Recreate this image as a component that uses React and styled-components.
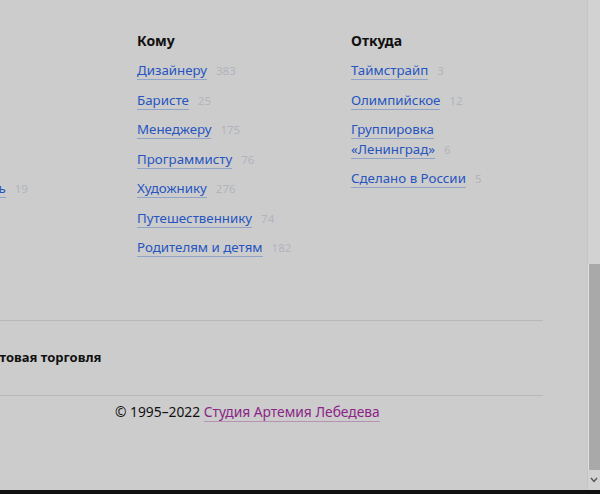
import styled, { createGlobalStyle } from 'styled-components';

const GlobalStyle = createGlobalStyle`
  html, body {
    margin: 0;
    padding: 0;
    background: #cccccc;
    overflow: hidden;
  }
  body {
    font-family: "Noto Sans", "Open Sans", Arial, sans-serif;
  }
`;

const Screen = styled.div`
  width: 600px;
  height: 494px;
  display: flex;
  flex-direction: column;
  overflow: hidden;
`;

const Viewport = styled.div`
  flex: 1;
  display: flex;
  min-height: 0;
`;

const Page = styled.div`
  flex: 1;
  overflow: hidden;
`;

const Inner = styled.div`
  width: 643px;
  margin-left: -100px;
`;

const Columns = styled.div`
  display: grid;
  grid-template-columns: repeat(3, 214px);
  padding: 31px 0 0 23px;
  height: 320px;
  box-sizing: border-box;
`;

const Column = styled.div`
  display: flex;
  flex-direction: column;
  width: 160px;
`;

const Heading = styled.div`
  font-size: 14px;
  font-weight: 700;
  line-height: 20px;
  color: #111;
  margin-bottom: 10px;
`;

const Item = styled.div`
  font-size: 13.3px;
  line-height: 19.5px;
  margin-bottom: 10px;
  color: #2655c0;
`;

const Link = styled.a`
  color: #2655c0;
  text-decoration: none;
  border-bottom: 1px solid rgba(38, 85, 192, 0.35);
`;

const Count = styled.span`
  font-size: 11.5px;
  line-height: 1;
  color: #b0b4bc;
  margin-left: 9px;
`;

const Rule = styled.div`
  height: 1px;
  background: #b8b8b8;
`;

const Category = styled.div`
  padding: 26px 0 28px 81px;
  font-size: 13px;
  font-weight: 700;
  line-height: 20px;
  color: #111;
`;

const Copyright = styled.div`
  padding: 6px 0 0 215px;
  font-size: 13.8px;
  line-height: 20px;
  color: #111;
`;

const StudioLink = styled.a`
  color: #8b2587;
  text-decoration: none;
  border-bottom: 1px solid rgba(139, 37, 135, 0.35);
`;

const Scrollbar = styled.div`
  width: 13px;
  display: flex;
  flex-direction: column;
  background: #d2d2d2;
  border-left: 1px solid #c6c6c6;
  box-sizing: border-box;
`;

const Track = styled.div`
  flex: 1;
  display: flex;
  flex-direction: column;
`;

const Thumb = styled.div`
  margin-top: 264px;
  height: 206px;
  background: #a9a9a9;
  border-left: 1px solid #e2e2e2;
`;

const Arrow = styled.div`
  height: 20px;
  display: flex;
  align-items: center;
  justify-content: center;
`;

const BottomBar = styled.div`
  height: 4px;
  background: #111;
`;

const left = [
  ['', null], ['', null], ['', null], ['', null], ['Дом, мебель', 19],
];

const whom = [
  ['Дизайнеру', 383],
  ['Баристе', 25],
  ['Менеджеру', 175],
  ['Программисту', 76],
  ['Художнику', 276],
  ['Путешественнику', 74],
  ['Родителям и детям', 182],
];

const from = [
  ['Таймстрайп', 3],
  ['Олимпийское', 12],
  ['Группировка «Ленинград»', 6],
  ['Сделано в России', 5],
];

const List = ({ items }) =>
  items.map(([name, count], i) => (
    <Item key={i}>
      {name ? (
        <>
          <Link href="#">{name}</Link>
          <Count>{count}</Count>
        </>
      ) : (
        <>&nbsp;</>
      )}
    </Item>
  ));

const App = () => (
  <Screen>
    <GlobalStyle />
    <Viewport>
      <Page>
        <Inner>
          <Columns>
            <Column>
              <Heading>Что</Heading>
              <List items={left} />
            </Column>
            <Column>
              <Heading>Кому</Heading>
              <List items={whom} />
            </Column>
            <Column>
              <Heading>Откуда</Heading>
              <List items={from} />
            </Column>
          </Columns>
          <Rule />
          <Category>Оптовая торговля</Category>
          <Rule />
          <Copyright>
            © 1995–2022 <StudioLink href="#">Студия Артемия Лебедева</StudioLink>
          </Copyright>
        </Inner>
      </Page>
      <Scrollbar>
        <Track>
          <Thumb />
        </Track>
        <Arrow>
          <svg width="8" height="6" viewBox="0 0 8 6">
            <path d="M1 1 L4 4.5 L7 1" stroke="#555" strokeWidth="1.4" fill="none" />
          </svg>
        </Arrow>
      </Scrollbar>
    </Viewport>
    <BottomBar />
  </Screen>
);

export default App;
